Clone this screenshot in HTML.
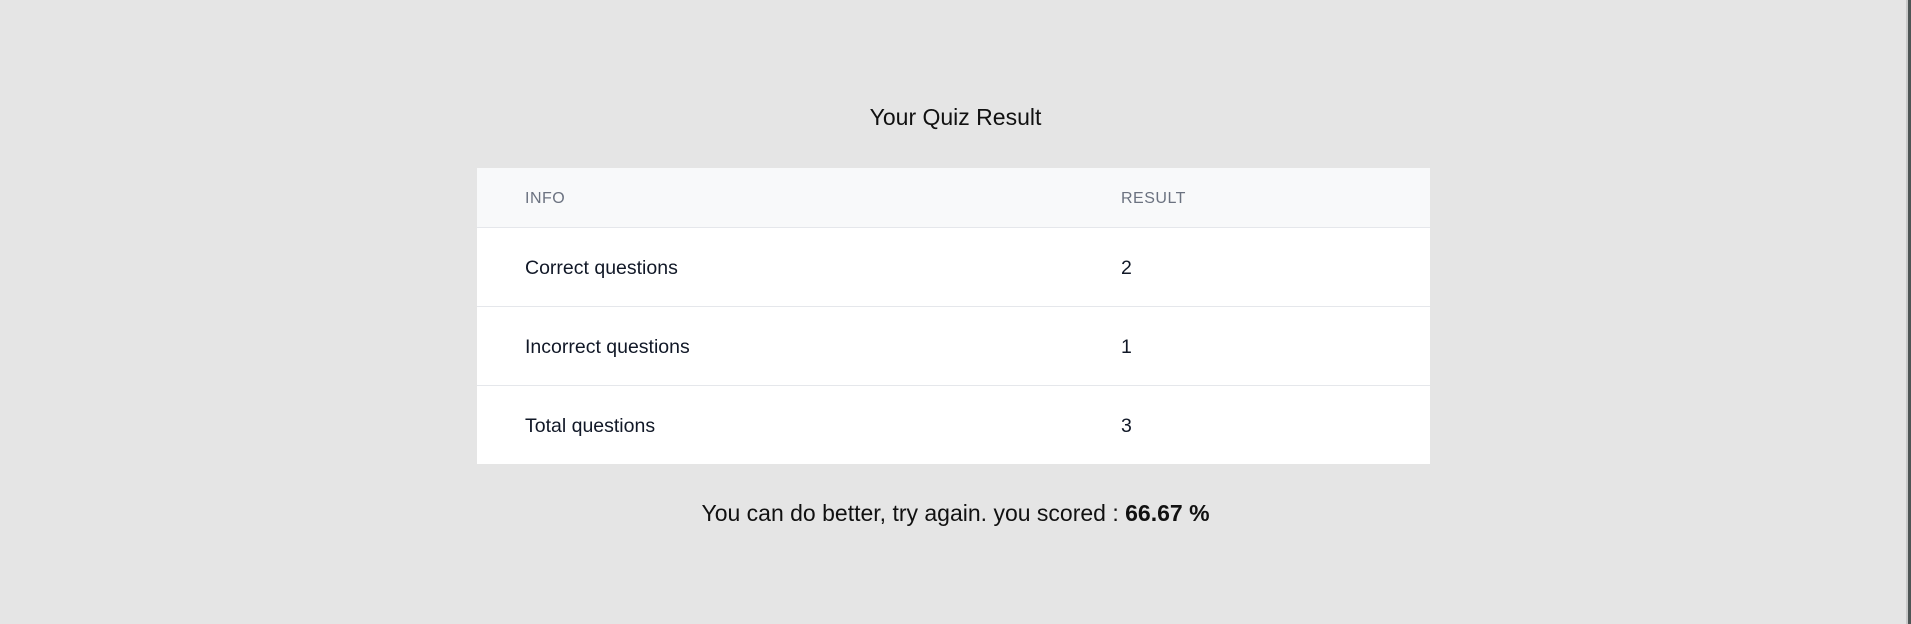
<!DOCTYPE html>
<html><head><meta charset="utf-8"><style>
html,body{margin:0;padding:0;}
body{width:1911px;height:624px;background:#e5e5e5;font-family:"Liberation Sans",sans-serif;position:relative;overflow:hidden;}
.title{position:absolute;left:0;width:1911px;top:104px;text-align:center;font-size:23px;color:#111;}
.tbl{position:absolute;left:477px;top:168px;width:953px;height:296px;background:#fff;}
.hd{position:absolute;left:0;top:0;width:953px;height:60px;background:#f8f9fa;border-bottom:1px solid #e5e7eb;box-sizing:border-box;}
.row{position:absolute;left:0;width:953px;height:79px;border-bottom:1px solid #e5e7eb;box-sizing:border-box;}
.c1{position:absolute;left:48px;}
.c2{position:absolute;left:644px;}
.hd span{top:22px;font-size:16px;color:#6b7280;letter-spacing:0.5px;}
.row span{top:29px;font-size:19.5px;color:#111827;}
.foot{position:absolute;left:0;width:1911px;top:500px;text-align:center;font-size:23px;color:#111;}
.sb1{position:absolute;left:1906px;top:0;width:2px;height:624px;background:#c9c9c9;}
.sb2{position:absolute;left:1908px;top:0;width:3px;height:624px;background:#4e5555;}
</style></head><body>
<div class="title">Your Quiz Result</div>
<div class="tbl">
<div class="hd"><span class="c1">INFO</span><span class="c2">RESULT</span></div>
<div class="row" style="top:60px"><span class="c1">Correct questions</span><span class="c2">2</span></div>
<div class="row" style="top:139px"><span class="c1">Incorrect questions</span><span class="c2">1</span></div>
<div class="row" style="top:218px;border-bottom:none"><span class="c1">Total questions</span><span class="c2">3</span></div>
</div>
<div class="foot">You can do better, try again. you scored : <b>66.67 %</b></div>
<div class="sb1"></div><div class="sb2"></div>
</body></html>
